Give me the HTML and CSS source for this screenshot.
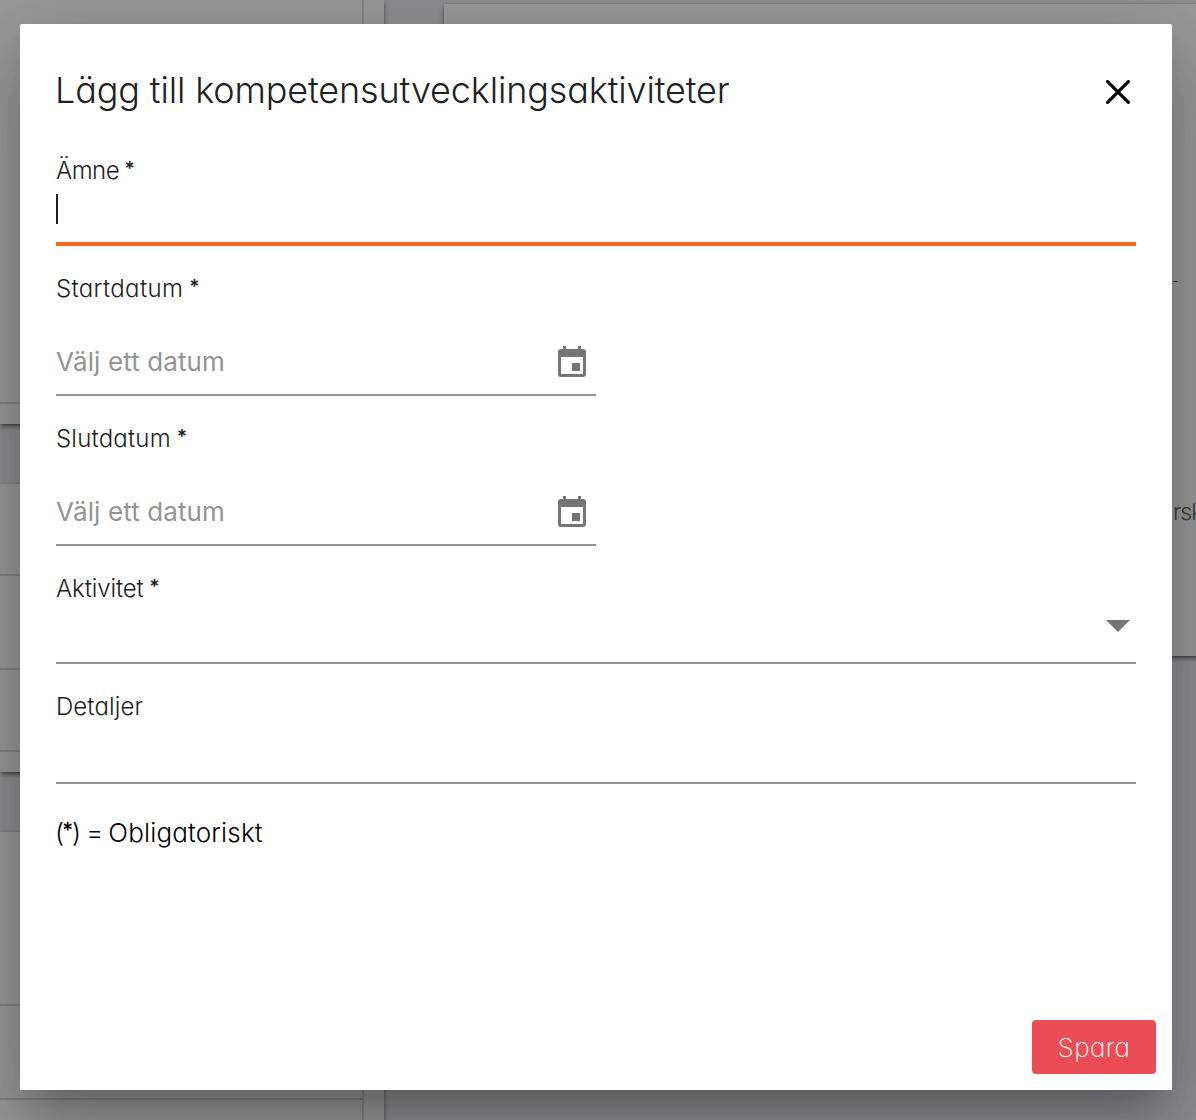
FILE: index.html
```html
<!DOCTYPE html>
<html lang="sv">
<head>
<meta charset="utf-8">
<title>Kompetensutveckling</title>
<link rel="stylesheet" href="styles.css">
</head>
<body>
<div class="page" aria-hidden="true">
  <div class="sidebar">
    <section class="panel panel-first"><div class="cell h402"></div><div class="cell h-last"></div></section>
    <section class="panel panel-second"><div class="cell h90"></div><div class="cell h92"></div><div class="cell h80"></div><div class="cell h-last"></div></section>
    <section class="panel panel-third"><div class="cell h172"></div><div class="cell h92"></div><div class="cell h-last"></div></section>
  </div>
  <section class="content-card"><span class="mark">-</span><span class="snippet">rsk</span></section>
</div>
<div class="backdrop">
  <form class="dialog" role="dialog" aria-labelledby="dialog-title">
    <header class="dialog-header">
      <h1 class="title" id="dialog-title">Lägg till kompetensutvecklingsaktiviteter</h1>
      <svg class="close" viewBox="0 0 24 24"><path d="M1.6 1.6 22.4 22.4M22.4 1.6 1.6 22.4"/></svg>
    </header>
    <div class="field subject"><label class="label l-amne">Ämne <b>*</b></label><div class="caret"></div></div>
    <div class="field date"><label class="label l-start">Startdatum <b>*</b></label>
      <div class="date-row"><span class="placeholder">Välj ett datum</span>
        <svg class="calendar" viewBox="0 0 28 31"><path fill-rule="evenodd" d="M5 0h3v3h12V0h3v3h2a3 3 0 0 1 3 3v22a3 3 0 0 1-3 3H3a3 3 0 0 1-3-3V6a3 3 0 0 1 3-3h2zM3 11v17h22V11zM14 17h8v8h-8z"/></svg></div></div>
    <div class="field date"><label class="label l-slut">Slutdatum <b>*</b></label>
      <div class="date-row"><span class="placeholder">Välj ett datum</span>
        <svg class="calendar" viewBox="0 0 28 31"><path fill-rule="evenodd" d="M5 0h3v3h12V0h3v3h2a3 3 0 0 1 3 3v22a3 3 0 0 1-3 3H3a3 3 0 0 1-3-3V6a3 3 0 0 1 3-3h2zM3 11v17h22V11zM14 17h8v8h-8z"/></svg></div></div>
    <div class="field activity"><label class="label l-akt">Aktivitet <b>*</b></label><svg class="arrow" viewBox="0 0 24 12"><path d="M0 0h24L12 12z"/></svg></div>
    <div class="field details"><label class="label l-det">Detaljer</label></div>
    <p class="note"><span class="legend">(<b>*</b>) = </span>Obligatoriskt</p>
    <footer class="actions"><button class="save" type="button">Spara</button></footer>
  </form>
</div>
</body>
</html>
```
FILE: styles.css
```css
* { box-sizing: border-box; }
body {
  margin: 0;
  height: 1120px;
  overflow: hidden;
  font-family: Inter, "Liberation Sans", sans-serif;
  font-feature-settings: "cv11" 1;
  background: #eeeef3;
}
.page {
  display: grid;
  grid-template-columns: 384px 1fr;
  column-gap: 60px;
  height: 1120px;
  overflow: hidden;
}
.sidebar { display: flex; flex-direction: column; gap: 60px; }
.panel {
  display: flex;
  flex-direction: column;
  background: #fff;
  box-shadow: 0 3px 5px -1px rgba(0, 0, 0, .5), 0 1px 4px rgba(0, 0, 0, .2);
}
.panel-first { height: 424px; }
.panel-second { height: 288px; }
.panel-third { height: 300px; }
.cell { width: 364px; border-right: 2px solid #dcdcdc; border-bottom: 2px solid #dcdcdc; }
.h402 { height: 404px; }
.h90 { height: 92px; }
.h92 { height: 94px; }
.h80 { height: 82px; }
.h172 { height: 174px; }
.h-last { flex: 1; border-bottom: 0; }
.content-card {
  display: flex;
  flex-direction: column;
  height: 652px;
  margin-top: 4px;
  padding: 264px 0 0 728px;
  background: #fff;
  box-shadow: 0 3px 5px -1px rgba(0, 0, 0, .5), 0 1px 4px rgba(0, 0, 0, .2);
  color: #666;
  font-size: 23px;
  line-height: 30px;
  font-weight: 300;
}
.mark { font-size: 14px; height: 229px; line-height: 26px; }
.snippet { padding-left: 1px; letter-spacing: -1px; }
.backdrop {
  position: absolute;
  inset: 0;
  padding: 24px 24px 30px 20px;
  overflow: hidden;
  background: rgba(0, 0, 0, .4);
}
.dialog {
  display: flex;
  flex-direction: column;
  height: 1066px;
  padding: 0 36px;
  border-radius: 2px 2px 0 0;
  background: #fff;
  color: #212121;
  box-shadow: 0 22px 30px -14px rgba(0, 0, 0, .2), 0 48px 76px 6px rgba(0, 0, 0, .14), 0 18px 92px 16px rgba(0, 0, 0, .12);
}
.dialog-header {
  display: flex;
  justify-content: space-between;
  align-items: center;
  height: 128px;
  padding: 8px 6px 0 0;
}
.title {
  margin: 0 0 4px -1px;
  font-size: 36px;
  line-height: 44px;
  font-weight: 300;
  letter-spacing: -.14px;
  white-space: nowrap;
}
.close { width: 24px; height: 24px; fill: none; stroke: #000; stroke-width: 3.2; stroke-linecap: round; }
.field { display: flex; flex-direction: column; border-bottom: 2px solid #949494; }
.label { font-size: 24px; line-height: 30px; font-weight: 300; white-space: nowrap; }
.l-amne { letter-spacing: -.5px; }
.l-start { letter-spacing: .35px; }
.l-slut { letter-spacing: .2px; }
.l-akt { letter-spacing: -.1px; }
.l-det { letter-spacing: .1px; }
b {
  display: inline-block;
  margin-left: -1px;
  font-weight: 600;
  font-size: .8em;
  line-height: 1;
  transform: translateY(-4px);
}
.subject { height: 94px; padding-top: 4px; border-bottom: 4px solid #f06a1a; }
.caret { width: 2px; height: 30px; margin-top: 8px; background: #212121; }
.date { width: 540px; height: 150px; padding-top: 28px; }
.date-row { display: flex; justify-content: space-between; align-items: center; height: 39px; margin-top: 38px; padding-right: 10px; }
.placeholder { color: #949494; font-size: 26px; line-height: 32px; font-feature-settings: normal; letter-spacing: .1px; }
.calendar { width: 28px; height: 31px; fill: #757575; }
.activity { height: 118px; padding-top: 28px; }
.arrow { align-self: flex-end; width: 24px; height: 12px; margin: 16px 6px 0 0; fill: #757575; }
.details { height: 120px; padding-top: 28px; }
.note { margin: 33px 0 0 -1px; color: #000; font-size: 26px; line-height: 32px; font-weight: 300; letter-spacing: .15px; white-space: nowrap; }
.legend { letter-spacing: -1.1px; }
.actions { display: flex; justify-content: flex-end; margin: auto -20px 16px 0; }
.save {
  width: 124px;
  height: 54px;
  padding: 0;
  border: 0;
  border-radius: 4px;
  background: #eb4d57;
  color: #fff;
  font: 200 26px Inter, sans-serif;
  font-feature-settings: "cv11" 1;
  letter-spacing: .4px;
}
```
